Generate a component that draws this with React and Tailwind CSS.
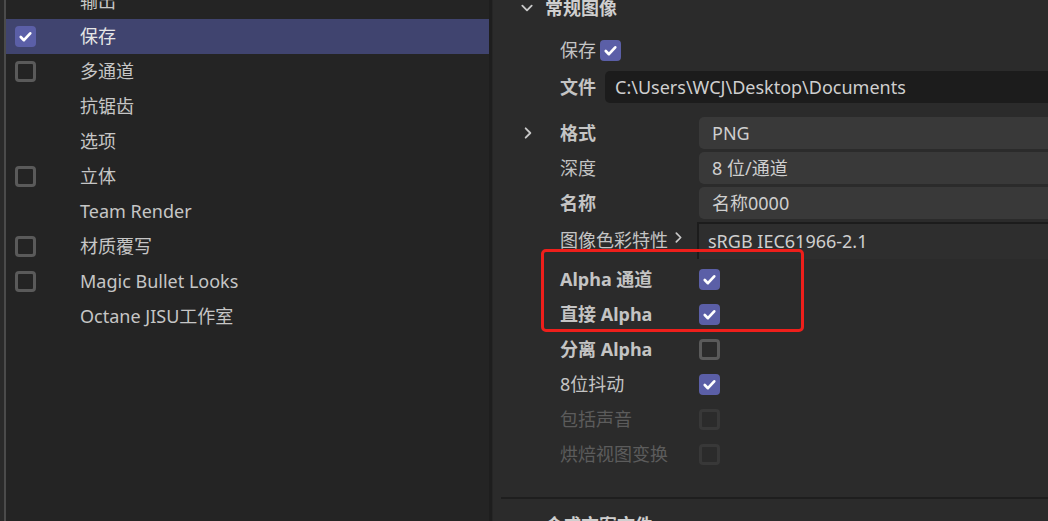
import React from "react";

const FONT = { fontFamily: '"Noto Sans", "Noto Sans CJK SC", sans-serif' };

const Check = () => (
  <svg viewBox="0 0 20 20" className="w-full h-full">
    <path
      d="M5.5 10.5l3 3L14.5 7"
      fill="none"
      stroke="#ffffff"
      strokeWidth="2.6"
      strokeLinecap="round"
      strokeLinejoin="round"
    />
  </svg>
);

const Box = ({ checked, dim }) =>
  checked ? (
    <div className="w-[21px] h-[21px] rounded-[4px] bg-[#5b5fa7]">
      <Check />
    </div>
  ) : (
    <div
      className={`w-[21px] h-[21px] rounded-[4px] border-[3px] ${
        dim ? "border-[#383838]" : "border-[#5a5a5a]"
      }`}
    />
  );

const Chevron = ({ dir = "right", className = "" }) => (
  <svg viewBox="0 0 12 12" className={className}>
    <path
      d={dir === "down" ? "M2 4l4 4 4-4" : "M4 2l4 4-4 4"}
      fill="none"
      stroke="#c8c8c8"
      strokeWidth="1.6"
      strokeLinecap="round"
      strokeLinejoin="round"
    />
  </svg>
);

const leftItems = [
  { name: "输出", box: false },
  { name: "保存", box: true, checked: true, active: true },
  { name: "多通道", box: true },
  { name: "抗锯齿", box: false },
  { name: "选项", box: false },
  { name: "立体", box: true },
  { name: "Team Render", box: false },
  { name: "材质覆写", box: true },
  { name: "Magic Bullet Looks", box: true },
  { name: "Octane JISU工作室", box: false },
];

const Field = ({ children, dark }) => (
  <div
    className={`flex-1 h-[32px] flex items-center rounded-l-[5px] text-[#cfcfcf] ${
      dark ? "bg-[#1c1c1c] pl-[10px]" : "bg-[#393939] pl-[13px]"
    }`}
  >
    {children}
  </div>
);

const CheckRow = ({ label, checked, bold, dim }) => (
  <div className="h-[35px] flex items-center">
    <div
      className={`w-[139px] pl-[67px] box-content ${bold ? "font-bold" : ""} ${
        dim ? "text-[#5c5c5c]" : "text-[#c4c4c4]"
      }`}
    >
      {label}
    </div>
    <Box checked={checked} dim={dim} />
  </div>
);

export default function App() {
  return (
    <div
      className="w-[1048px] h-[521px] overflow-hidden flex bg-[#242424] text-[18px]"
      style={FONT}
    >
      {/* edge of the neighbouring panel */}
      <div className="w-[6px] shrink-0 bg-[#2a2a2a] border-r-2 border-[#4b4b4b]" />

      {/* left list */}
      <div className="w-[483px] shrink-0 bg-[#242424] overflow-hidden">
        <ul className="-mt-[16px]">
          {leftItems.map((item) => (
            <li
              key={item.name}
              className={`h-[35px] flex items-center ${
                item.active ? "bg-[#40446f] text-[#e6e6e6]" : "text-[#c6c6c6]"
              }`}
            >
              <div className="w-[74px] pl-[9px]">
                {item.box && <Box checked={item.checked} />}
              </div>
              <span>{item.name}</span>
            </li>
          ))}
        </ul>
      </div>

      {/* divider */}
      <div className="w-[4px] shrink-0 bg-[#1e1e1e] border-r border-[#262626]" />

      {/* right settings panel */}
      <div className="relative flex-1 bg-[#2b2b2b] overflow-hidden">
        <div className="-mt-[10px] h-[36px] flex items-center font-bold text-[#cfcfcf]">
          <Chevron dir="down" className="w-[14px] h-[14px] ml-[27px] mr-[11px]" />
          常规图像
        </div>

        <div className="mt-[6px] h-[36px] flex items-center text-[#c4c4c4]">
          <span className="pl-[67px] mr-[4px]">保存</span>
          <Box checked />
        </div>

        <div className="mt-[3px] h-[32px] flex items-center">
          <span className="pl-[67px] w-[45px] box-content font-bold text-[#c4c4c4]">文件</span>
          <Field dark>C:\Users\WCJ\Desktop\Documents</Field>
        </div>

        <div className="mt-[14px] h-[32px] flex items-center">
          <Chevron className="w-[14px] h-[14px] ml-[28px] mr-[25px]" />
          <span className="w-[139px] font-bold text-[#c4c4c4]">格式</span>
          <Field>PNG</Field>
        </div>

        <div className="mt-[3px] h-[32px] flex items-center">
          <span className="pl-[67px] w-[139px] box-content text-[#c4c4c4]">深度</span>
          <Field>8 位/通道</Field>
        </div>

        <div className="mt-[3px] h-[32px] flex items-center">
          <span className="pl-[67px] w-[139px] box-content font-bold text-[#c4c4c4]">名称</span>
          <Field>名称0000</Field>
        </div>

        <div className="mt-[3px] h-[37px] flex items-center">
          <span className="pl-[67px] w-[137px] box-content flex items-center text-[#c4c4c4]">
            图像色彩特性
            <Chevron className="w-[13px] h-[13px] ml-[4px] -mt-[6px]" />
          </span>
          <div className="flex-1 h-[37px] flex items-center pl-[9px] bg-[#2e2e2e] border-t-2 border-l-2 border-[#1c1c1c] text-[#cfcfcf]">
            sRGB IEC61966-2.1
          </div>
        </div>

        <div className="mt-[3px]">
          <CheckRow label="Alpha 通道" checked bold />
          <CheckRow label="直接 Alpha" checked bold />
          <CheckRow label="分离 Alpha" bold />
          <CheckRow label="8位抖动" checked />
          <CheckRow label="包括声音" dim />
          <CheckRow label="烘焙视图变换" dim />
        </div>

        <div className="mt-[25px] ml-[8px] h-[2px] bg-[#1e1e1e]" />

        <div className="mt-[8px] h-[36px] flex items-center font-bold text-[#cfcfcf]">
          <Chevron dir="down" className="w-[14px] h-[14px] ml-[27px] mr-[11px]" />
          合成方案文件
        </div>

        {/* red highlight box */}
        <div className="absolute left-[48px] top-[249px] w-[263px] h-[83px] border-[3px] border-[#ee1f1b] rounded-[5px]" />
      </div>
    </div>
  );
}
